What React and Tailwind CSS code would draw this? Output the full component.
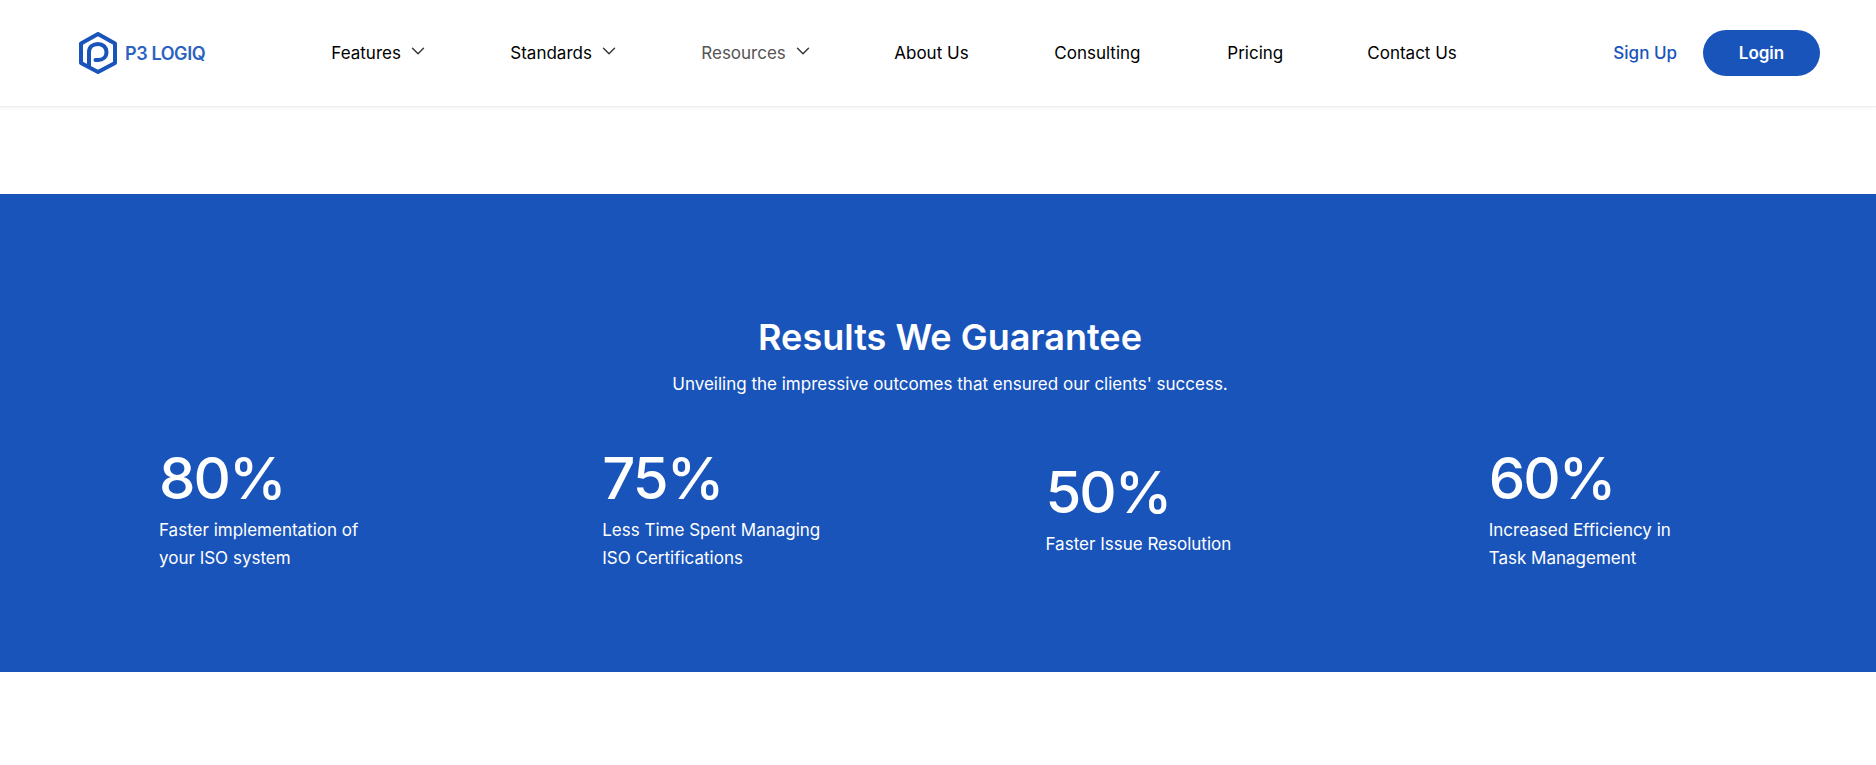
import { ChevronDown } from 'lucide-react'

const navItems = [
  { label: 'Features', caret: true, width: 'w-[179px]' },
  { label: 'Standards', caret: true, width: 'w-[191px]' },
  { label: 'Resources', caret: true, width: 'w-[193px]', muted: true },
  { label: 'About Us', width: 'w-[160px]' },
  { label: 'Consulting', width: 'w-[173px]' },
  { label: 'Pricing', width: 'w-[140px]' },
  { label: 'Contact Us' },
]

const stats = [
  { value: '80%', lines: ['Faster implementation of', 'your ISO system'] },
  { value: '75%', lines: ['Less Time Spent Managing', 'ISO Certifications'] },
  { value: '50%', lines: ['Faster Issue Resolution'] },
  { value: '60%', lines: ['Increased Efficiency in', 'Task Management'] },
]

function Logo() {
  return (
    <div className="flex items-center gap-[8px]">
      <svg width="38" height="42" viewBox="0 0 38 42" fill="none" stroke="#1954bb" strokeWidth="4" strokeLinejoin="round" strokeLinecap="round">
        <path d="M19 2 L36 11.5 V31 L19 40 L2 31 V11.5 Z" />
        <path d="M10 34 V20 C10 15 14 12 19 12 C24 12 27.5 15.5 27.5 20 C27.5 25 24 28 19 28 H16.5" />
      </svg>
      <span className="text-[18px] font-semibold tracking-[-0.4px] text-[#2c62c0]">P3 LOGIQ</span>
    </div>
  )
}

export default function App() {
  return (
    <div className="h-[765px] overflow-hidden bg-white font-['Inter',sans-serif]">
      <header className="flex h-[107px] items-center border-b border-[#f0f0f0] pl-[79px] pr-[56px] shadow-[0_1px_4px_rgba(0,0,0,0.06)]">
        <Logo />
        <nav className="mt-[2px] ml-[126px] flex items-center text-[17px] text-black">
          {navItems.map((item) => (
            <div key={item.label} className={`flex items-center gap-[6px] ${item.width ?? ''} ${item.muted ? 'text-[#555555]' : ''}`}>
              <span>{item.label}</span>
              {item.caret && <ChevronDown size={22} strokeWidth={1.5} className="mb-[6px] text-[#333333]" />}
            </div>
          ))}
        </nav>
        <div className="ml-auto flex items-center gap-[26px]">
          <a className="mt-[2px] text-[17px] font-medium text-[#1954bb]">Sign Up</a>
          <button className="h-[46px] w-[117px] rounded-full bg-[#1954bb] pt-[2px] text-[17px] font-semibold text-white">Login</button>
        </div>
      </header>

      <section className="mt-[87px] h-[478px] bg-[#1954bb] px-[159px] pt-[121px] text-white">
        <div className="pl-[24px]">
          <h2 className="text-center text-[36px] leading-[44px] font-semibold">Results We Guarantee</h2>
          <p className="mt-[13px] text-center text-[17px] leading-[24px]">Unveiling the impressive outcomes that ensured our clients' success.</p>
        </div>
        <div className="mt-[46px] grid grid-cols-4 items-center gap-x-[215px]">
          {stats.map((stat) => (
            <div key={stat.value}>
              <div className="text-[58px] leading-[72px] font-medium tracking-[-2px]">{stat.value}</div>
              <div className="mt-[2px] text-[17px] leading-[28px] whitespace-nowrap">
                {stat.lines.map((line) => (
                  <div key={line}>{line}</div>
                ))}
              </div>
            </div>
          ))}
        </div>
      </section>
    </div>
  )
}
